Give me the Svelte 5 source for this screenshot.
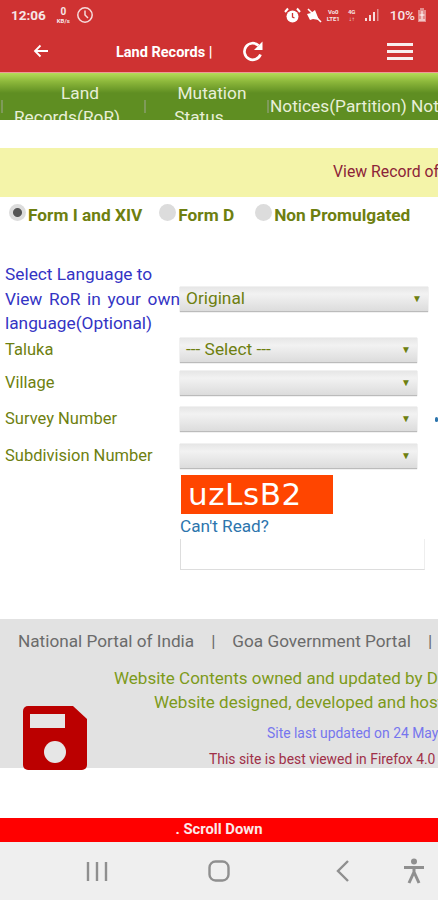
<script>
  let rows = [
    { label: "Taluka", value: "--- Select ---", gap: 8 },
    { label: "Village", value: "", gap: 11 },
    { label: "Survey Number", value: "", gap: 12, more: true },
    { label: "Subdivision Number", value: "", gap: 6 }
  ];
  let radios = [
    { label: "Form I and XIV", on: true },
    { label: "Form D", on: false },
    { label: "Non Promulgated", on: false }
  ];
</script>

<div class="screen">
  <header class="top">
    <div class="status">
      <span class="time">12:06</span>
      <span class="kb"><b>0</b><i>KB/s</i></span>
      <svg class="clock" width="18" height="18" viewBox="0 0 18 18"><circle cx="9" cy="9" r="7.2" fill="none" stroke="#f6dcdc" stroke-width="1.5"/><path d="M9 4.5V9l3 3" fill="none" stroke="#f6dcdc" stroke-width="1.5"/></svg>
      <span class="spacer"></span>
      <svg class="alarm" width="17" height="17" viewBox="0 0 17 17"><circle cx="8.5" cy="9.5" r="6" fill="#fff"/><path d="M8.5 6v4l2 1" fill="none" stroke="#cf3232" stroke-width="1.3"/><path d="M1 5l3-3.5M16 5l-3-3.5" stroke="#fff" stroke-width="2"/></svg>
      <svg class="mute" width="17" height="17" viewBox="0 0 17 17"><path d="M2 7l4-1 4-3 4 10-6-1-3 1z" fill="#fff"/><path d="M3 2l13 13" stroke="#fff" stroke-width="1.6"/></svg>
      <span class="net"><i>Vo0</i><i>LTE1</i></span>
      <span class="net four"><i>4G</i><i>↓↑</i></span>
      <svg class="bars" width="15" height="14" viewBox="0 0 15 14"><path d="M1 10h2v3H1zM5 7h2v6H5zM9 4h2v9H9z" fill="#f6dcdc"/><path d="M13 1h1.5v12H13z" fill="#e48d8d"/></svg>
      <span class="pct">10%</span>
      <svg class="batt" width="10" height="16" viewBox="0 0 10 16"><path d="M3 1h4v2h2v12H1V3h2z" fill="#e48d8d"/><path d="M5 4v8M2.500 8h5M2 13h6" stroke="#fff" stroke-width="1"/></svg>
    </div>
    <div class="bar">
      <svg class="back" width="16" height="14" viewBox="0 0 16 14"><path d="M15 7H2M7.500 1.500L2 7l5.500 5.500" fill="none" stroke="#fff" stroke-width="1.800"/></svg>
      <span class="title">Land Records |</span>
      <svg class="reload" width="24" height="24" viewBox="0 0 24 24"><path d="M19.500 14.500A8.300 8.300 0 1 1 17.500 5.500" fill="none" stroke="#fff" stroke-width="2.700"/><path d="M21.500 1.500V10h-8.500z" fill="#fff"/></svg>
      <span class="burger"><i></i><i></i><i></i></span>
    </div>
  </header>

  <nav class="tabs">
    <span class="tabsep"></span>
    <a class="tab one">Land Records(RoR)</a>
    <span class="tabsep"></span>
    <a class="tab two">Mutation Status</a>
    <span class="tabsep"></span>
    <a class="tab wide">Notices(Partition) Notices(Mutation)</a>
  </nav>

  <div class="banner"><span>View Record of Rights</span></div>

  <div class="radios">
    {#each radios as r}
      <label class="radio"><span class="dot" class:on={r.on}></span>{r.label}</label>
    {/each}
  </div>

  <section class="form">
    <div class="lang">
      <p class="langlabel">Select Language to<br /><span class="just">View RoR in your own</span><br />language(Optional)</p>
      <div class="select big"><span>Original</span><i>▼</i></div>
    </div>
    {#each rows as row}
      <div class="row" style="padding-bottom:{row.gap}px">
        <label>{row.label}</label>
        <div class="select"><span>{row.value}</span><i>▼</i></div>
        {#if row.more}<span class="more"></span>{/if}
      </div>
    {/each}
    <div class="captcha">
      <div class="code">uzLsB2</div>
      <a class="cant">Can't Read?</a>
      <div class="input"></div>
    </div>
  </section>

  <footer class="foot">
    <div class="links"><span>National Portal of India</span><span class="sep">|</span><span>Goa Government Portal</span><span class="sep">|</span></div>
    <p class="own first">Website Contents owned and updated by Directorate</p>
    <p class="own second">Website designed, developed and hosted by NIC</p>
    <p class="upd">Site last updated on 24 May 2019</p>
    <p class="best">This site is best viewed in Firefox 4.0 and above</p>
    <svg class="floppy" width="64" height="64" viewBox="0 0 64 64"><path d="M5 0h45l14 13v46a5 5 0 0 1-5 5H5a5 5 0 0 1-5-5V5a5 5 0 0 1 5-5z" fill="#bb0000"/><rect x="7" y="8" width="35" height="14" fill="#e6e6e6"/><circle cx="32" cy="46" r="11" fill="#e6e6e6"/></svg>
  </footer>

  <div class="gap"></div>
  <div class="scroll">. Scroll Down</div>

  <div class="softkeys">
    <svg width="22" height="22" viewBox="0 0 22 22"><path d="M2 2v19M11 2v19M20 2v19" stroke="#8f8f8f" stroke-width="2.400" fill="none"/></svg>
    <svg width="22" height="22" viewBox="0 0 22 22"><rect x="1.500" y="1.500" width="19" height="19" rx="6" stroke="#8f8f8f" stroke-width="2.400" fill="none"/></svg>
    <svg width="14" height="22" viewBox="0 0 14 22"><path d="M12 1L2 11l10 10" stroke="#8f8f8f" stroke-width="2.400" fill="none"/></svg>
    <svg width="22" height="26" viewBox="0 0 22 26"><circle cx="11" cy="3.500" r="3" fill="#8f8f8f"/><path d="M1 9.500h20M11 9v6M11 14l-5 11M11 14l5 11" stroke="#8f8f8f" stroke-width="3" fill="none"/></svg>
  </div>
</div>

<style>
  :global(body) {
    margin: 0;
    background: #fff;
  }
  .screen {
    width: 438px;
    height: 900px;
    display: flex;
    flex-direction: column;
    overflow: hidden;
    font-family: Roboto, "Liberation Sans", sans-serif;
  }
  .top {
    height: 73px;
    box-sizing: border-box;
    background: #cf3232;
    color: #fff;
    flex: none;
    border-bottom: 1px solid #ee9a9a;
  }
  .status {
    height: 30px;
    display: flex;
    align-items: center;
    padding: 0 11px 0 11px;
    color: #f6e6e6;
  }
  .time {
    font-size: 13.500px;
    font-weight: 700;
  }
  .kb {
    display: flex;
    flex-direction: column;
    align-items: center;
    margin-left: 11px;
    line-height: 7px;
  }
  .kb b {
    font-size: 10px;
    line-height: 10px;
  }
  .kb i,
  .net i {
    font-style: normal;
    font-size: 6px;
    font-weight: 700;
    line-height: 7px;
    white-space: nowrap;
  }
  .clock {
    margin-left: 6px;
  }
  .spacer {
    flex: 1;
  }
  .mute {
    margin-left: 4px;
  }
  .net {
    display: flex;
    flex-direction: column;
    align-items: center;
    width: 17px;
    margin-left: 3px;
  }
  .four {
    width: 10px;
    margin-left: 5px;
  }
  .bars {
    margin-left: 7px;
  }
  .pct {
    margin-left: 11px;
    font-size: 13.500px;
    font-weight: 500;
  }
  .batt {
    margin-left: 2px;
  }
  .bar {
    height: 42px;
    display: flex;
    align-items: center;
  }
  .back {
    margin-left: 33px;
  }
  .title {
    margin: 2px 0 0 67px;
    font-size: 14.500px;
    font-weight: 700;
    width: 125px;
    white-space: nowrap;
  }
  .reload {
    margin-top: 2px;
  }
  .burger {
    margin-left: 122px;
    width: 26px;
    display: flex;
    flex-direction: column;
    gap: 4px;
  }
  .burger i {
    height: 3px;
    background: #f8eeee;
  }
  .tabs {
    height: 47px;
    flex: none;
    display: flex;
    overflow: hidden;
    padding-left: 1px;
    background: linear-gradient(#b4dc58 0, #8bb63a 9px, #5f8e22 20px, #5f8e22 100%);
    color: #e8efd8;
    font-size: 17.300px;
    line-height: 24px;
  }
  .tabsep {
    flex: none;
    width: 2px;
    height: 13px;
    margin-top: 27px;
    background: #7f9a5a;
  }
  .tab {
    flex: none;
    text-align: center;
    text-indent: 26px;
    padding-top: 8px;
    box-sizing: border-box;
  }
  .one {
    width: 118px;
    margin: 0 18px 0 5px;
  }
  .two {
    width: 100px;
    margin: 0 18px 0 3px;
  }
  .wide {
    white-space: nowrap;
    text-indent: 0;
    padding-top: 21px;
    margin-left: 1px;
  }
  .banner {
    margin-top: 28px;
    height: 49px;
    flex: none;
    box-sizing: border-box;
    background: #f4f4a9;
    display: flex;
    align-items: center;
    padding: 0 0 3px 333px;
    font-size: 15.800px;
    color: #8c2438;
    white-space: nowrap;
    overflow: hidden;
  }
  .radios {
    display: flex;
    height: 38px;
    box-sizing: border-box;
    flex: none;
    align-items: center;
    padding: 0 0 2px 9px;
    font-size: 17.300px;
    font-weight: 700;
    color: #6e7f10;
    white-space: nowrap;
  }
  .radio {
    display: flex;
    align-items: center;
    margin-right: 17px;
  }
  .radio:nth-child(2) {
    margin-right: 21px;
  }
  .dot {
    width: 17px;
    height: 17px;
    border-radius: 50%;
    background: #dcdcdc;
    position: relative;
    top: -3px;
    margin-right: 2px;
    flex: none;
  }
  .dot.on {
    background: radial-gradient(circle, #555 0 4px, #dcdcdc 5px);
  }
  .form {
    padding: 27px 0 0 5px;
    height: 384px;
    box-sizing: border-box;
    flex: none;
    position: relative;
  }
  .lang {
    display: flex;
    align-items: flex-start;
    height: 76px;
  }
  .langlabel {
    margin: 0;
    width: 175px;
    flex: none;
    font-size: 17.300px;
    line-height: 24.500px;
    color: #3434c4;
    white-space: nowrap;
  }
  .just {
    display: inline-block;
    width: 175px;
    text-align: justify;
    text-align-last: justify;
  }
  .select {
    height: 25px;
    background: linear-gradient(#e6e6e6, #f2f2f2 30%, #dcdcdc);
    border-bottom: 1px solid #bbb;
    box-shadow: 0 0 1px #aaa;
    display: flex;
    align-items: center;
    justify-content: space-between;
    box-sizing: border-box;
    width: 237px;
    padding: 0 6px 2px 6px;
    font-size: 17.300px;
    color: #6e7f10;
    flex: none;
  }
  .select i {
    font-style: normal;
    font-size: 10px;
  }
  .big {
    width: 248px;
    margin-top: 25px;
  }
  .row {
    display: flex;
    align-items: center;
  }
  .row label {
    width: 175px;
    flex: none;
    font-size: 16.500px;
    color: #6e7f10;
    margin-bottom: 2px;
  }
  .more {
    flex: none;
    width: 3px;
    height: 5px;
    margin-left: 18px;
    border-radius: 2px;
    background: #2d75ad;
  }
  .captcha {
    margin-left: 175px;
  }
  .code {
    width: 152px;
    height: 39px;
    background: #ff4500;
    color: #fff;
    font-family: "DejaVu Sans", sans-serif;
    font-size: 31px;
    letter-spacing: 0.6px;
    line-height: 38px;
    padding-left: 7px;
    box-sizing: border-box;
    margin-left: 1px;
  }
  .cant {
    display: block;
    color: #2d75ad;
    font-size: 17.200px;
    line-height: 25px;
  }
  .input {
    width: 245px;
    height: 31px;
    box-sizing: border-box;
    border: 1px solid #ddd;
    border-top: 0;
    border-right-color: #eee;
  }
  .foot {
    height: 149px;
    flex: none;
    background: #e2e2e2;
    position: relative;
    overflow: visible;
  }
  .links {
    display: flex;
    white-space: nowrap;
    padding: 13px 0 0 18px;
    font-size: 17.200px;
    line-height: 19px;
    color: #6b6b6b;
  }
  .sep {
    margin: 0 17px;
  }
  .foot p {
    margin: 0;
    white-space: nowrap;
  }
  .own {
    font-size: 17px;
    line-height: 24px;
    color: #7d9a1a;
  }
  .foot .first {
    margin: 15px 0 0 114px;
  }
  .foot .second {
    margin-left: 154px;
  }
  .foot .upd {
    margin: 7px 0 0 267px;
    font-size: 13.900px;
    line-height: 24px;
    color: #7676ee;
  }
  .foot .best {
    margin: 2px 0 0 209px;
    font-size: 13.900px;
    line-height: 24px;
    color: #a03048;
  }
  .floppy {
    position: absolute;
    left: 23px;
    top: 87px;
  }
  .gap {
    flex: 1;
  }
  .scroll {
    height: 24px;
    flex: none;
    background: #ff0000;
    color: #fbe9e9;
    font-size: 14.800px;
    font-weight: 700;
    line-height: 22px;
    text-align: center;
  }
  .softkeys {
    height: 58px;
    flex: none;
    background: #efefef;
    display: flex;
    align-items: center;
    padding-left: 86px;
  }
  .softkeys svg:nth-child(2) {
    margin-left: 100px;
  }
  .softkeys svg:nth-child(3) {
    margin-left: 106px;
  }
  .softkeys svg:nth-child(4) {
    margin-left: 53px;
  }
</style>
